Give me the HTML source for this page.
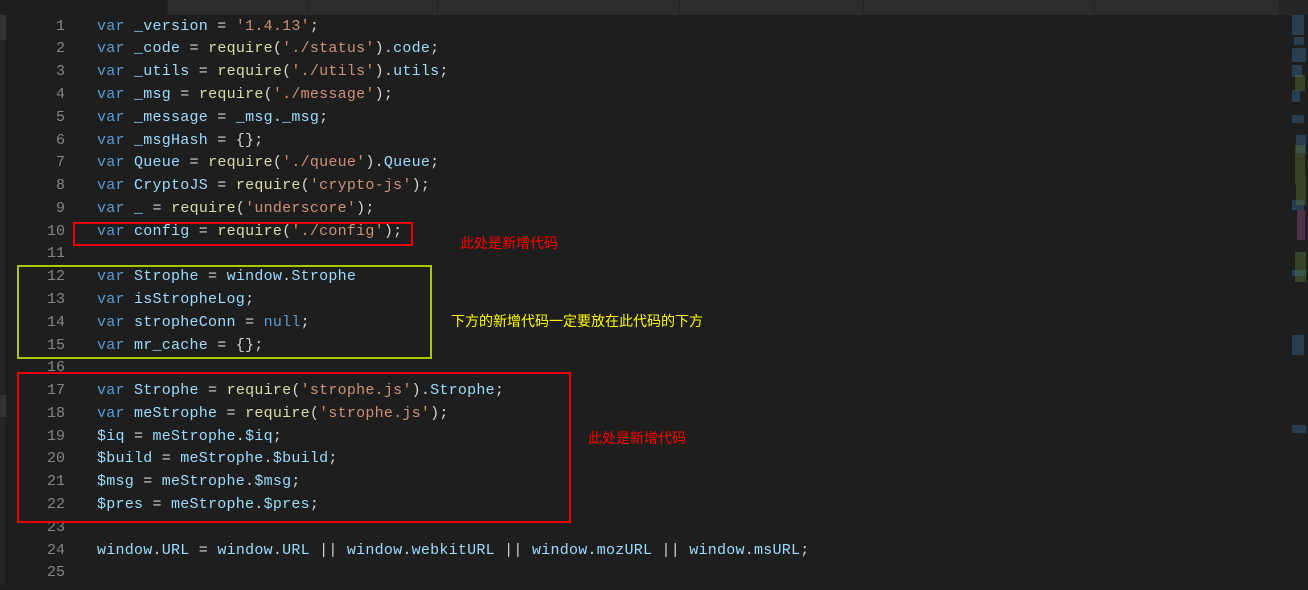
<!DOCTYPE html>
<html><head><meta charset="utf-8"><style>
*{margin:0;padding:0;box-sizing:border-box}
body{width:1308px;height:585px;background:#1e1e1e;position:relative;overflow:hidden;font-family:"Liberation Mono",monospace}
.tabs{position:absolute;left:0;top:0;width:1308px;height:15px;background:#252526}
.tab{position:absolute;top:0;height:15px;background:#2d2d2d;border-right:1px solid #252526}
.strip{position:absolute;left:0;top:15px;width:6px;height:570px;background:#252526}
.ln{position:absolute;left:20px;width:45px;text-align:right;color:#858585;font-size:15px;line-height:22.78px}
.cd{position:absolute;left:97px;white-space:pre;font-size:15px;letter-spacing:0.25px;line-height:22.78px;color:#d4d4d4}
.k{color:#569cd6}.v{color:#9cdcfe}.f{color:#dcdcaa}.s{color:#ce9178}
.box{position:absolute;border:2px solid}
.note{position:absolute;font-family:"Liberation Sans","Noto Sans CJK SC",sans-serif;font-size:14px}
.mini{position:absolute;left:1292px;top:15px;width:16px;height:570px}
</style></head><body>
<div class="tabs">
<div class="tab" style="left:0;width:168px;background:#1e1e1e"></div>
<div class="tab" style="left:168px;width:141px"></div>
<div class="tab" style="left:309px;width:129px"></div>
<div class="tab" style="left:438px;width:242px"></div>
<div class="tab" style="left:680px;width:184px"></div>
<div class="tab" style="left:864px;width:231px"></div>
<div class="tab" style="left:1095px;width:185px"></div>
</div>
<div class="strip"></div>
<div style="position:absolute;left:0;top:15px;width:6px;height:25px;background:#333"></div>
<div style="position:absolute;left:0;top:395px;width:6px;height:22px;background:#333"></div>
<div class="mini">
<svg width="16" height="570"><g fill="#3b6e9a" opacity="0.4">
<rect x="0" y="0" width="12" height="20"/><rect x="2" y="22" width="10" height="8"/><rect x="0" y="33" width="14" height="14"/><rect x="0" y="50" width="10" height="12"/><rect x="0" y="75" width="8" height="12"/><rect x="0" y="100" width="12" height="8"/><rect x="4" y="120" width="10" height="18"/><rect x="0" y="185" width="12" height="10"/><rect x="0" y="255" width="14" height="6"/><rect x="0" y="320" width="12" height="20"/><rect x="0" y="410" width="14" height="8"/></g>
<g fill="#5a7a3a" opacity="0.4"><rect x="3" y="60" width="10" height="16"/><rect x="3" y="130" width="10" height="40"/><rect x="4" y="160" width="10" height="30"/><rect x="3" y="237" width="11" height="30"/></g>
<g fill="#a05aa0" opacity="0.35"><rect x="5" y="195" width="8" height="30"/></g></svg>
</div>
<div class="ln" style="top:15.6px">1<br>2<br>3<br>4<br>5<br>6<br>7<br>8<br>9<br>10<br>11<br>12<br>13<br>14<br>15<br>16<br>17<br>18<br>19<br>20<br>21<br>22<br>23<br>24<br>25</div>
<div class="cd" style="top:15.6px"><span class="k">var</span> <span class="v">_version</span> = <span class="s">'1.4.13'</span>;
<span class="k">var</span> <span class="v">_code</span> = <span class="f">require</span>(<span class="s">'./status'</span>).<span class="v">code</span>;
<span class="k">var</span> <span class="v">_utils</span> = <span class="f">require</span>(<span class="s">'./utils'</span>).<span class="v">utils</span>;
<span class="k">var</span> <span class="v">_msg</span> = <span class="f">require</span>(<span class="s">'./message'</span>);
<span class="k">var</span> <span class="v">_message</span> = <span class="v">_msg</span>.<span class="v">_msg</span>;
<span class="k">var</span> <span class="v">_msgHash</span> = {};
<span class="k">var</span> <span class="v">Queue</span> = <span class="f">require</span>(<span class="s">'./queue'</span>).<span class="v">Queue</span>;
<span class="k">var</span> <span class="v">CryptoJS</span> = <span class="f">require</span>(<span class="s">'crypto-js'</span>);
<span class="k">var</span> <span class="v">_</span> = <span class="f">require</span>(<span class="s">'underscore'</span>);
<span class="k">var</span> <span class="v">config</span> = <span class="f">require</span>(<span class="s">'./config'</span>);

<span class="k">var</span> <span class="v">Strophe</span> = <span class="v">window</span>.<span class="v">Strophe</span>
<span class="k">var</span> <span class="v">isStropheLog</span>;
<span class="k">var</span> <span class="v">stropheConn</span> = <span class="k">null</span>;
<span class="k">var</span> <span class="v">mr_cache</span> = {};

<span class="k">var</span> <span class="v">Strophe</span> = <span class="f">require</span>(<span class="s">'strophe.js'</span>).<span class="v">Strophe</span>;
<span class="k">var</span> <span class="v">meStrophe</span> = <span class="f">require</span>(<span class="s">'strophe.js'</span>);
<span class="v">$iq</span> = <span class="v">meStrophe</span>.<span class="v">$iq</span>;
<span class="v">$build</span> = <span class="v">meStrophe</span>.<span class="v">$build</span>;
<span class="v">$msg</span> = <span class="v">meStrophe</span>.<span class="v">$msg</span>;
<span class="v">$pres</span> = <span class="v">meStrophe</span>.<span class="v">$pres</span>;

<span class="v">window</span>.<span class="v">URL</span> = <span class="v">window</span>.<span class="v">URL</span> || <span class="v">window</span>.<span class="v">webkitURL</span> || <span class="v">window</span>.<span class="v">mozURL</span> || <span class="v">window</span>.<span class="v">msURL</span>;
</div>
<div class="box" style="left:73px;top:222px;width:340px;height:24px;border-color:#e00"></div>
<div class="box" style="left:17px;top:265px;width:415px;height:94px;border-color:#a8c800"></div>
<div class="box" style="left:17px;top:372px;width:554px;height:151px;border-color:#e00"></div>
<div class="note" style="left:460px;top:233px;color:#f00">此处是新增代码</div>
<div class="note" style="left:451px;top:311px;color:#ff0">下方的新增代码一定要放在此代码的下方</div>
<div class="note" style="left:588px;top:428px;color:#f00">此处是新增代码</div>
</body></html>
